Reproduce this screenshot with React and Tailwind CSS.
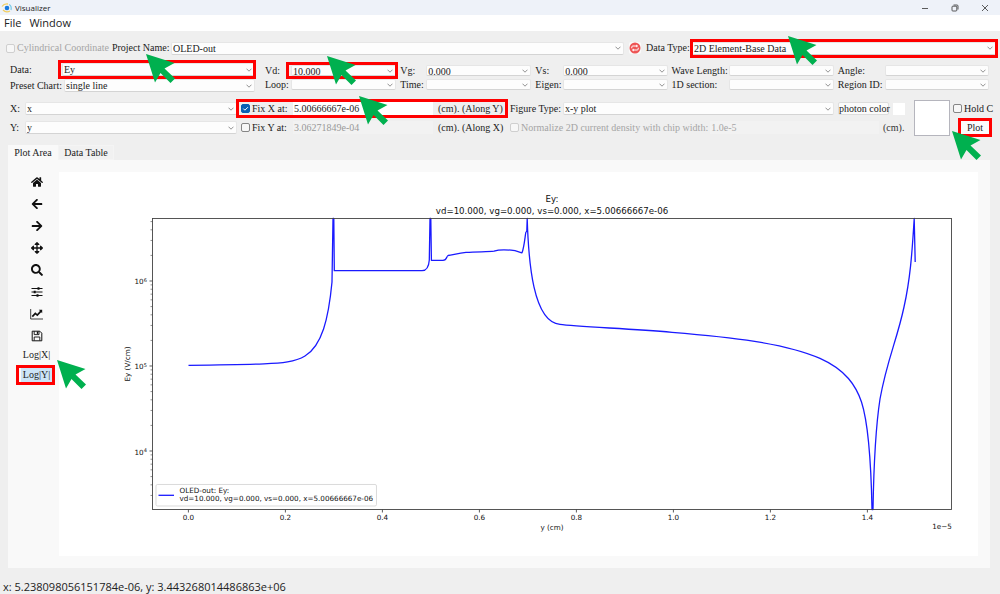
import React from "react";
import { FaHome, FaArrowLeft, FaArrowRight, FaArrowsAlt, FaSearch } from "react-icons/fa";

const RED = "pointer-events-none absolute z-10 border-[3px] border-[#ff0000]";

function Arrow({ className }) {
  return (
    <svg aria-hidden="true" viewBox="0 0 29 29" className={`pointer-events-none absolute z-20 size-[29px] ${className}`}>
      <path d="M0 0 28.5 9 18.5 14.5 29 24.5 24.5 29 14.5 19 9 28.5Z" fill="#00b04f" />
    </svg>
  );
}

function Select({ id, label, value = "", className = "h-[13px]", children }) {
  return (
    <div className="relative flex min-w-0 flex-1 items-center">
      <select
        id={id}
        aria-label={label}
        defaultValue={value}
        className={`w-full min-w-0 appearance-none rounded-xs border border-[#e6e6e6] border-b-[#d4d4d4] bg-[#fdfdfd] pl-px text-[#222] outline-none ${className}`}
      >
        <option>{value}</option>
      </select>
      <svg aria-hidden="true" viewBox="0 0 6 4" className="pointer-events-none absolute right-[3px] h-1 w-[6px]">
        <path d="M.5.7 3 3.2 5.5.7" fill="none" stroke="#777" strokeWidth=".8" />
      </svg>
      {children}
    </div>
  );
}

function Check({ id, label, disabled, checked }) {
  return (
    <span className={`flex shrink-0 items-center gap-[2px] ${disabled ? "text-[#a5a5a5]" : ""}`}>
      <span className="relative flex size-[9px]">
        <input
          id={id}
          type="checkbox"
          disabled={disabled}
          defaultChecked={checked}
          className="size-[9px] appearance-none rounded-xs border border-[#858585] bg-[#f7f7f7] checked:border-[#0a5fb4] checked:bg-[#0a5fb4] disabled:border-[#cfcfcf]"
        />
        {checked && (
          <svg aria-hidden="true" viewBox="0 0 9 9" className="pointer-events-none absolute inset-0 size-[9px]">
            <path d="m2.3 4.6 1.6 1.6 3-3" fill="none" stroke="#fff" strokeWidth="1" />
          </svg>
        )}
      </span>
      <label htmlFor={id} className="whitespace-nowrap">{label}</label>
    </span>
  );
}

const params = [
  [["Vd:", "10.000"], ["Loop:", ""]],
  [["Vg:", "0.000"], ["Time:", ""]],
  [["Vs:", "0.000"], ["Eigen:", ""]],
  [["Wave Length:", ""], ["1D section:", ""]],
  [["Angle:", ""], ["Region ID:", ""]],
];
const paramCols = [
  "grid-cols-[26px_minmax(0,1fr)]",
  "grid-cols-[26px_minmax(0,1fr)]",
  "grid-cols-[28px_minmax(0,1fr)]",
  "grid-cols-[57px_minmax(0,1fr)]",
  "grid-cols-[47px_minmax(0,1fr)]",
];

function ParamGroup({ rows, cols }) {
  return (
    <div className={`grid items-center gap-y-[3px] ${cols}`}>
      {rows.map(([label, value]) => (
        <React.Fragment key={label}>
          <label htmlFor={label} className="whitespace-nowrap leading-[11px]">{label}</label>
          <Select id={label} value={value} className="h-[11px]">
            {label === "Vd:" && (
              <>
                <span className={`${RED} -inset-y-[3px] -right-[2px] -left-[5px]`} />
                <Arrow className="-top-[9px] left-9" />
              </>
            )}
          </Select>
        </React.Fragment>
      ))}
    </div>
  );
}

const curve =
  "M188.5 365.3C215 365 245 364.6 264 363.9 282 363.2 295 362 305 356C322 345.500 328.500 319 332 282L333 218.5H333.8L334.3 270.7H422C427 270.7 428.8 267 429.3 260L430 218.5H430.8L431.4 260.3H443C447 260.3 446.5 256 448 255.5 452 255.3 458 253 466 252.4 478 251.6 488 252 494 251.2 499 249.4 505 249.6 511 250.2 516 250.6 519 252 522 252.8 524 248 525 237 525.8 232.5L526.8 231 527.2 218.5C528.5 262 533 322 560 324.3C575 326.500 625 328.500 672 332.300C730 337 785 343 820 358.400C846 370 856 386 861.500 402C868 422 871 458 872 509.5H873C874 450 876 425 880 399C887 360 897 340 904 307C910 280 912 255 914.2 218.5L915.2 262";

const xTicks = ["0.0", "0.2", "0.4", "0.6", "0.8", "1.0", "1.2", "1.4"];
const yTicks = [[6, 281], [5, 366], [4, 451]];
const minor = [];
for (let d = 3; d <= 6; d++)
  for (let n = 2; n <= 9; n++) {
    const y = 281 + (6 - d - Math.log10(n)) * 85;
    if (y > 218.5 && y < 509.5) minor.push(y);
  }

// Figure units: fonts are in points, plotted shapes are scaled by 1 / 0.72.
const U = 0.72;
const fx = (x) => (x - 59) / U;
const fy = (y) => (y - 172) / U;

function Chart() {
  return (
    <svg
      role="img"
      aria-label="Ey plot"
      viewBox={`0 0 ${919 / U} ${384 / U}`}
      className="block h-auto w-full bg-white font-['DejaVu_Sans',sans-serif]"
      fill="#111"
    >
      <g transform={`scale(${1 / U}) translate(-59 -172)`} fill="none">
        {xTicks.map((t, i) => (
          <path key={t} d={`M${188.4 + i * 97} 509.5v3`} stroke="#333" strokeWidth=".8" />
        ))}
        {yTicks.map(([p, y]) => (
          <path key={p} d={`M149.5 ${y}h3`} stroke="#333" strokeWidth=".8" />
        ))}
        {minor.map((y) => (
          <path key={y} d={`M150.5 ${y}h2`} stroke="#444" strokeWidth=".6" />
        ))}
        <path d={curve} stroke="#1a1aff" strokeWidth="1.3" strokeLinejoin="round" />
        <rect x="152.5" y="218.5" width="799" height="291" stroke="#444" strokeWidth=".9" />
        <rect x="156" y="484.5" width="220.5" height="21.5" rx="1.5" fill="#fff" stroke="#d0d0d0" strokeWidth=".8" />
        <path d="M158.5 495.3H174" stroke="#1a1aff" strokeWidth="1.3" />
      </g>
      <g textAnchor="middle" fontSize="12">
        <text x={fx(552)} y={fy(202.5)}>Ey:</text>
        <text x={fx(552)} y={fy(213.5)}>vd=10.000, vg=0.000, vs=0.000, x=5.00666667e-06</text>
      </g>
      <g fontSize="10" textAnchor="middle">
        {xTicks.map((t, i) => (
          <text key={t} x={fx(188.4 + i * 97)} y={fy(520)}>{t}</text>
        ))}
        <text x={fx(552)} y={fy(530)}>y (cm)</text>
        <text x={fx(942)} y={fy(529.5)}>1e−5</text>
        <text transform={`translate(${fx(130)} ${fy(364)}) rotate(-90)`}>Ey (V/cm)</text>
      </g>
      <g fontSize="10">
        {yTicks.map(([p, y]) => (
          <text key={p} x={fx(134.5)} y={fy(y + 3.5)}>
            10<tspan dy="-4" fontSize="7">{p}</tspan>
          </text>
        ))}
        <text x={fx(179.5)} y={fy(492.7)}>OLED-out: Ey:</text>
        <text x={fx(179.5)} y={fy(501.2)}>vd=10.000, vg=0.000, vs=0.000, x=5.00666667e-06</text>
      </g>
    </svg>
  );
}

function Sliders() {
  return (
    <svg viewBox="0 0 12 12" className="size-3" stroke="#111" fill="#111">
      <path d="M.5 2.5h11M.5 6h11M.5 9.5h11" strokeWidth="1" />
      <path d="M7.5 1.2v2.6M3.7 4.700v2.6M6.5 8.2v2.6" strokeWidth="2" />
    </svg>
  );
}
function LineChart() {
  return (
    <svg viewBox="0 0 13 12" className="h-3 w-[13px]" fill="none" stroke="#111">
      <path d="M.7 1v10H13" strokeWidth=".8" />
      <path d="M2.3 8.6 5.3 5.4 7.3 7.1 11 3.2" strokeWidth="1.7" />
      <path d="M8.8 1.8h3.4v3.4z" fill="#111" stroke="none" />
    </svg>
  );
}
function Save() {
  return (
    <svg viewBox="0 0 12 12" className="size-3" fill="none" stroke="#111">
      <path d="M1.2 1.2h7.6l2 2v7.6H1.2z" strokeWidth="1" strokeLinejoin="round" />
      <path d="M3.2 10.5V7h5.6v3.5" strokeWidth=".9" />
      <path d="M3.2 1.2v3.4h4.8V1.2" strokeWidth=".9" />
      <path d="M5.8 1.5h1.4v2.4H5.8z" fill="#111" stroke="none" />
    </svg>
  );
}

const tools = [
  ["Home", <FaHome />],
  ["Back", <FaArrowLeft />],
  ["Forward", <FaArrowRight />],
  ["Pan", <FaArrowsAlt />],
  ["Zoom", <FaSearch />],
  ["Subplots", <Sliders />],
  ["Customize", <LineChart />],
  ["Save", <Save />],
];

export default function App() {
  return (
    <div className="flex min-h-screen flex-col overflow-hidden bg-[#efefef] font-['Liberation_Serif',serif] text-[10px] leading-3 text-[#222]">
      <header className="flex h-[15px] items-center bg-[#eef2f9] pl-px font-['Open_Sans',sans-serif] text-[8px]">
        <svg aria-hidden="true" viewBox="0 0 12 10" className="mr-[2px] h-[10px] w-3">
          <path d="M1 3.5Q3 .5 7 1M2 7Q5 10 9 8" fill="none" stroke="#f2cf63" strokeWidth="1.3" />
          <path d="M8 1.5Q11 3 10 7" fill="none" stroke="#7ccbe8" strokeWidth="1.3" />
          <circle cx="6" cy="5" r="2.3" fill="#1779df" />
        </svg>
        <h1 className="flex-1">Visualizer</h1>
        <button aria-label="Minimize" className="flex w-[30px] justify-center">
          <svg viewBox="0 0 8 8" className="size-2"><path d="M1 4.5h6" stroke="#333" strokeWidth=".8" /></svg>
        </button>
        <button aria-label="Restore" className="flex w-[30px] justify-center">
          <svg viewBox="0 0 8 8" className="size-2" fill="none" stroke="#333" strokeWidth=".8">
            <rect x="1" y="2.2" width="4.8" height="4.8" rx=".8" />
            <path d="M2.5 1H6q1 0 1 1v3.5" />
          </svg>
        </button>
        <button aria-label="Close" className="flex w-[30px] justify-center">
          <svg viewBox="0 0 8 8" className="size-2"><path d="m1 1 6 6m0-6L1 7" stroke="#333" strokeWidth=".8" /></svg>
        </button>
      </header>

      <nav className="flex h-4 items-center gap-2 bg-white pl-1 font-['Open_Sans',sans-serif] text-[11px]">
        <button>File</button>
        <button>Window</button>
      </nav>

      <section className="flex flex-col pt-[11px]">
        <div className="flex h-3 items-center pr-1 pl-[6px]">
          <Check id="cyl" label="Cylindrical Coordinate" disabled />
          <label htmlFor="project" className="relative ml-[3px] w-[59px] shrink-0 whitespace-nowrap">
            Project Name:
            <Arrow className="top-3 left-[34px]" />
          </label>
          <div className="flex min-w-0 flex-[453]">
            <Select id="project" value="OLED-out" />
          </div>
          <button aria-label="Refresh" className="mx-[5px] flex size-3 items-center justify-center rounded-xs bg-[#fafafa]">
            <svg viewBox="0 0 12 12" className="size-3">
              <circle cx="6" cy="6" r="5.5" fill="#ee5555" />
              <path d="M2.8 6.3V5q0-1 1-1h4M9.2 5.7V7q0 1-1 1h-4" fill="none" stroke="#fff" strokeWidth="1" />
              <path d="M7.2 2.4 9.2 4l-2 1.6zM4.8 6.4 2.8 8l2 1.6z" fill="#fff" />
            </svg>
          </button>
          <label htmlFor="dtype" className="w-[46px] shrink-0 whitespace-nowrap">Data Type:</label>
          <div className="flex min-w-0 flex-[304]">
            <Select id="dtype" value="2D Element-Base Data">
              <span className={`${RED} -inset-x-[2px] -inset-y-[3px]`} />
              <Arrow className="-top-[6px] left-24" />
            </Select>
          </div>
        </div>

        <div className="mt-[9px] flex items-center pr-[11px] pl-[10px]">
          <div className="flex min-w-0 flex-[245] flex-col gap-[3px]">
            <div className="flex items-center">
              <label htmlFor="data" className="w-[52px] shrink-0">Data:</label>
              <Select id="data" value="Ey">
                <span className={`${RED} -inset-y-[3px] -right-px -left-1`} />
              </Select>
            </div>
            <div className="flex items-center">
              <label htmlFor="preset" className="w-[54px] shrink-0 whitespace-nowrap">Preset Chart:</label>
              <Select id="preset" value="single line" />
            </div>
          </div>
          <div className="ml-[10px] grid min-w-0 flex-[724] grid-cols-[131fr_131fr_132fr_162fr_151fr] gap-x-1">
            {params.map((rows, i) => (
              <ParamGroup key={i} rows={rows} cols={paramCols[i]} />
            ))}
          </div>
        </div>

        <div className="mt-2 flex items-center pl-[10px]">
          <div className="flex min-w-0 flex-[227] flex-col gap-[6px]">
            <div className="flex items-center">
              <label htmlFor="xa" className="w-[15px]">X:</label>
              <Select id="xa" value="x" />
            </div>
            <div className="flex items-center">
              <label htmlFor="ya" className="w-[15px]">Y:</label>
              <Select id="ya" value="y" />
            </div>
          </div>
          <div className="ml-1 flex min-w-0 flex-[262] flex-col gap-[6px]">
            <div className="relative flex items-center">
              <div className="w-[52px] shrink-0"><Check id="fx" label="Fix X at:" checked /></div>
              <input aria-label="Fix X value" defaultValue="5.00666667e-06" className="h-[13px] min-w-0 flex-1 bg-white pl-px" />
              <span className="w-[70px] shrink-0 pl-[5px] whitespace-nowrap">(cm). (Along Y)</span>
              <span className={`${RED} -inset-x-[5px] -inset-y-[3px]`} />
              <Arrow className="-top-[6px] left-[118px]" />
            </div>
            <div className="flex items-center">
              <div className="w-[52px] shrink-0"><Check id="fy" label="Fix Y at:" /></div>
              <input aria-label="Fix Y value" disabled defaultValue="3.06271849e-04" className="h-[13px] min-w-0 flex-1 bg-[#f2f2f2] pl-px text-[#999]" />
              <span className="w-[70px] shrink-0 pl-[5px] whitespace-nowrap">(cm). (Along X)</span>
            </div>
          </div>
          <div className="ml-[7px] flex min-w-0 flex-[395] flex-col gap-[6px]">
            <div className="flex items-center">
              <label htmlFor="fig" className="w-[53px] shrink-0 whitespace-nowrap">Figure Type:</label>
              <Select id="fig" value="x-y plot" />
              <button className="ml-1 h-[13px] w-[51px] shrink-0 rounded-xs border border-[#ddd] bg-[#fbfbfb] leading-[11px] whitespace-nowrap">photon color</button>
              <span className="ml-1 size-3 shrink-0 bg-white" />
            </div>
            <div className="flex items-center text-[#a5a5a5]">
              <Check id="norm" label="Normalize 2D current density with chip width:" disabled />
              <input aria-label="Chip width" disabled defaultValue="1.0e-5" className="ml-[2px] h-[13px] min-w-0 flex-1 bg-[#f2f2f2] pl-px" />
              <span className="w-[26px] shrink-0 pl-1 text-[#333]">(cm).</span>
            </div>
          </div>
          <div className="ml-[9px] size-9 shrink-0 border border-[#b5b5bd] bg-white" />
          <div className="ml-[3px] flex w-[47px] shrink-0 flex-col gap-[6px]">
            <Check id="hold" label="Hold C" />
            <div className="relative ml-2 w-7">
              <button className="block h-[13px] w-full bg-[#fbfbfb] leading-[13px]">Plot</button>
              <span className={`${RED} -inset-[3px]`} />
              <Arrow className="top-[10px] -left-[9px]" />
            </div>
          </div>
        </div>
      </section>

      <main className="mt-[9px] mr-[10px] ml-2">
        <div role="tablist" className="flex h-[15px]">
          <button role="tab" aria-selected="true" className="w-[50px] bg-[#f9f9f9] whitespace-nowrap">Plot Area</button>
          <button role="tab" aria-selected="false" className="w-14 border border-[#f4f4f4] bg-[#f1f1f1] whitespace-nowrap">Data Table</button>
        </div>
        <div className="flex bg-[#f9f9f9] py-3 pr-3">
          <div role="toolbar" className="flex w-[51px] shrink-0 flex-col items-center pl-[6px]">
            {tools.map(([name, icon]) => (
              <button key={name} aria-label={name} className="mb-[2px] flex h-5 w-6 items-center justify-center text-[12px] text-[#111]">
                {icon}
              </button>
            ))}
            <button className="h-[14px] w-8">Log|X|</button>
            <div className="relative mt-[6px]">
              <button className="block h-[14px] w-8 bg-[#cce4f7]">Log|Y|</button>
              <span className={`${RED} -inset-y-[3px] -right-[2px] -left-[5px]`} />
              <Arrow className="-top-2 left-9" />
            </div>
          </div>
          <div className="min-w-0 flex-1">
            <Chart />
          </div>
        </div>
      </main>

      <footer className="mt-auto pb-px pl-[3px] font-['Open_Sans',sans-serif] text-[11px]">
        x: 5.238098056151784e-06, y: 3.443268014486863e+06
      </footer>
    </div>
  );
}
